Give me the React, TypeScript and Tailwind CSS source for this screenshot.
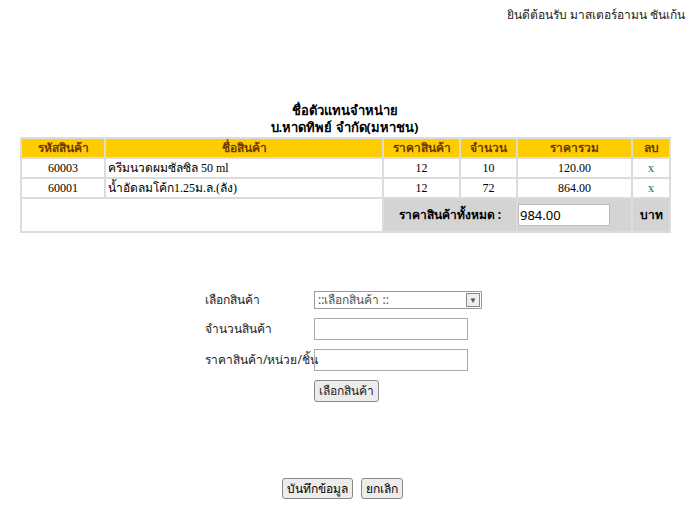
export default function App() {
  const rows = [
    { code: '60003', name: 'ครีมนวดผมซัลซิล 50 ml', price: 12, qty: 10, total: '120.00' },
    { code: '60001', name: 'น้ำอัดลมโค้ก1.25ม.ล.(ลัง)', price: 12, qty: 72, total: '864.00' },
  ];
  const font = { fontFamily: "Tahoma, 'Noto Sans', 'Liberation Serif', sans-serif" };
  const serif = { fontFamily: "'Liberation Serif', 'Noto Sans', serif" };
  return (
    <div className="w-[689px] h-[514px] bg-white text-black text-[12px]" style={font}>
      <div className="flex justify-end pr-1 pt-[6px] h-[20px] text-[12px] text-[#222]">
        ยินดีต้อนรับ มาสเตอร์อามน ชันเก้น
      </div>
      <div className="mt-[82px] text-center font-bold text-[13px] leading-[17px]">
        <div>ชื่อตัวแทนจำหน่าย</div>
        <div>บ.หาดทิพย์ จำกัด(มหาชน)</div>
      </div>
      <table className="mt-[1px] ml-[20px] w-[651px] border-separate border-spacing-[2px] bg-[#dcdcdc] text-[12px]">
        <thead>
          <tr className="bg-[#ffcc00] text-[#6b3a00] font-bold h-[17px]">
            <th className="w-[82px] font-bold">รหัสสินค้า</th>
            <th className="w-[276px] font-bold">ชื่อสินค้า</th>
            <th className="w-[75px] font-bold">ราคาสินค้า</th>
            <th className="w-[55px] font-bold">จำนวน</th>
            <th className="w-[113px] font-bold">ราคารวม</th>
            <th className="font-bold">ลบ</th>
          </tr>
        </thead>
        <tbody style={serif}>
          {rows.map((r) => (
            <tr key={r.code} className="bg-white h-[18px] text-[12px]">
              <td className="text-center">{r.code}</td>
              <td className="pl-[2px]">{r.name}</td>
              <td className="text-center">{r.price}</td>
              <td className="text-center">{r.qty}</td>
              <td className="text-center">{r.total}</td>
              <td className="text-center text-[#2a6a2a]">x</td>
            </tr>
          ))}
          <tr className="h-[32px]">
            <td colSpan={2} className="bg-white"></td>
            <td colSpan={2} className="bg-[#d4d4d4] text-center font-bold" style={font}>ราคาสินค้าทั้งหมด :</td>
            <td className="bg-[#d4d4d4]">
              <input readOnly value="984.00" className="w-[92px] h-[22px] bg-white border border-[#bbb] px-[1px] text-[13px]" style={font} />
            </td>
            <td className="bg-[#d4d4d4] text-center font-bold" style={font}>บาท</td>
          </tr>
        </tbody>
      </table>
      <div className="mt-[58px] ml-[205px] grid grid-cols-[109px_auto] gap-y-[9px] items-center text-[12px] text-[#222]">
        <div className="whitespace-nowrap">เลือกสินค้า</div>
        <div className="w-[168px] h-[18px] border border-[#999] flex items-center justify-between pl-[3px] text-[#555]">
          <span>::เลือกสินค้า ::</span>
          <span className="w-[14px] h-[14px] mr-[1px] border border-[#888] bg-[#eee] flex items-center justify-center text-[8px]">▼</span>
        </div>
        <div className="whitespace-nowrap">จำนวนสินค้า</div>
        <div className="w-[154px] h-[22px] border border-[#aaa]"></div>
        <div className="whitespace-nowrap">ราคาสินค้า/หน่วย/ชิ้น</div>
        <div className="w-[154px] h-[22px] border border-[#aaa]"></div>
        <div></div>
        <div>
          <button className="h-[22px] px-[4px] border border-[#888] rounded-[3px] bg-[#ececec]">เลือกสินค้า</button>
        </div>
      </div>
      <div className="mt-[76px] flex justify-center gap-[8px] pr-[4px]">
        <button className="h-[21px] px-[4px] border border-[#888] rounded-[3px] bg-[#ececec]">บันทึกข้อมูล</button>
        <button className="h-[21px] px-[4px] border border-[#888] rounded-[3px] bg-[#ececec]">ยกเลิก</button>
      </div>
    </div>
  );
}
